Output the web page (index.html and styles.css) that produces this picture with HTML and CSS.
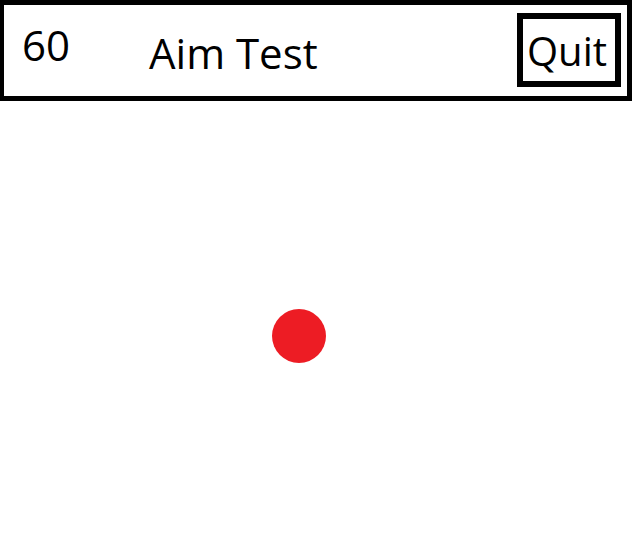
FILE: index.html
```html
<!DOCTYPE html>
<html>
<head>
<meta charset="utf-8">
<title>Aim Test</title>
<link rel="stylesheet" href="styles.css">
</head>
<body>
<header class="bar">
  <div class="score">60</div>
  <div class="title">Aim Test</div>
  <button class="quit">Quit</button>
</header>
<main class="field">
  <div class="target"></div>
</main>
</body>
</html>
```
FILE: styles.css
```css
html, body {
  margin: 0;
  padding: 0;
  background: #ffffff;
}
body {
  font-family: "Open Sans", "Noto Sans", sans-serif;
  color: #000000;
  width: 635px;
  height: 533px;
  overflow: hidden;
}
.bar {
  box-sizing: border-box;
  width: 632px;
  height: 101px;
  border-style: solid;
  border-color: #000;
  border-width: 5px 5px 5px 4px;
  display: flex;
  align-items: flex-start;
  font-size: 42px;
  line-height: 42px;
}
.score {
  margin-top: 19px;
  margin-left: 18px;
}
.title {
  margin-top: 27px;
  margin-left: 79px;
}
.quit {
  margin-left: auto;
  margin-right: 6px;
  margin-top: 8px;
  box-sizing: border-box;
  width: 104px;
  height: 74px;
  border: 6px solid #000;
  background: #fff;
  font: inherit;
  font-size: 40px;
  line-height: 42px;
  color: #000;
  padding: 11px 4px 0 0;
  display: flex;
  align-items: flex-start;
  justify-content: center;
  cursor: pointer;
}
.field {
  position: relative;
  height: 432px;
}
.target {
  position: absolute;
  left: 272px;
  top: 208px;
  width: 54px;
  height: 54px;
  border-radius: 50%;
  background: #ed1c24;
}
```
